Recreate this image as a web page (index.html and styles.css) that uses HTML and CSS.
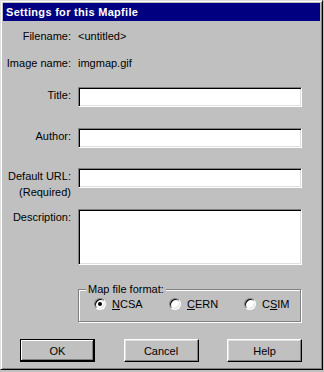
FILE: index.html
```html
<!DOCTYPE html>
<html>
<head>
<meta charset="utf-8">
<link rel="stylesheet" href="styles.css">
</head>
<body>
<div class="window">
  <div class="titlebar">Settings for this Mapfile</div>
  <div class="body">
    <div class="row r-file"><span class="label">Filename:</span><span class="value">&lt;untitled&gt;</span></div>
    <div class="row r-image"><span class="label">Image name:</span><span class="value">imgmap.gif</span></div>
    <div class="row r-title"><label class="label">Title:</label><input class="field" type="text"></div>
    <div class="row r-author"><label class="label">Author:</label><input class="field" type="text"></div>
    <div class="row r-url"><label class="label">Default URL:<br>(Required)</label><input class="field" type="text"></div>
    <div class="row r-desc"><label class="label">Description:</label><textarea class="field area"></textarea></div>
    <div class="row r-format">
      <span class="label"></span>
      <fieldset class="group">
        <legend class="legend">Map file format:</legend>
        <div class="radios">
          <span class="opt"><span class="radio on"></span><span><u>N</u>CSA</span></span>
          <span class="opt"><span class="radio"></span><span><u>C</u>ERN</span></span>
          <span class="opt"><span class="radio"></span><span>C<u>S</u>IM</span></span>
        </div>
      </fieldset>
    </div>
    <div class="buttons">
      <button class="btn default">OK</button>
      <button class="btn">Cancel</button>
      <button class="btn">Help</button>
    </div>
  </div>
</div>
</body>
</html>
```
FILE: styles.css
```css
* { box-sizing: border-box; }
html, body { margin: 0; }
body {
  background: #c0c0c0;
  font: 11px "Liberation Sans", Arial, sans-serif;
  color: #000;
}
.window {
  width: 323px;
  height: 370px;
  background: #c0c0c0;
  border: 1px solid;
  border-color: #dfdfdf #000 #000 #dfdfdf;
  box-shadow: inset 1px 1px #fff, inset -1px -1px #808080;
  padding: 2px;
  display: flex;
  flex-direction: column;
}
.titlebar {
  height: 18px;
  line-height: 18px;
  background: #000080;
  color: #fff;
  font-weight: bold;
  letter-spacing: 0.3px;
  padding-left: 3px;
}
.body { display: flex; flex-direction: column; }
.row { display: flex; align-items: flex-start; gap: 7px; }
.label {
  width: 68px;
  flex: none;
  text-align: right;
  line-height: 16px;
}
.value { line-height: 16px; }
.r-file { margin-top: 7px; }
.r-image { margin-top: 11px; }
.r-title { margin-top: 16px; }
.r-author { margin-top: 21px; }
.r-url { margin-top: 20px; }
.r-desc { margin-top: 9px; }
.r-format { margin-top: 17px; }
.field {
  width: 224px;
  height: 20px;
  margin: 0;
  padding: 0 3px;
  background: #fff;
  border: 1px solid;
  border-color: #808080 #fff #fff #808080;
  box-shadow: inset 1px 1px #000, inset -1px -1px #dfdfdf;
  font: inherit;
  outline: none;
}
.area { height: 56px; resize: none; overflow: hidden; }
.group {
  width: 223px;
  margin: 0;
  padding: 1px 0 10px 0;
  border: 1px solid #808080;
  box-shadow: 1px 1px 0 #fff, inset 1px 1px 0 #fff;
  min-width: 0;
}
.legend {
  margin-left: 7px;
  padding: 0 2px;
  line-height: 14px;
  background: #c0c0c0;
}
.radios {
  display: grid;
  grid-template-columns: 75px 75px 75px;
  padding-left: 15px;
}
.opt {
  display: flex;
  align-items: center;
  gap: 6px;
  line-height: 14px;
}
.radio {
  width: 12px;
  height: 12px;
  flex: none;
  border-radius: 50%;
  background: #fff;
  border: 1px solid;
  border-color: #808080 #fff #fff #808080;
  box-shadow: inset 1px 1px #000, inset -1px -1px #dfdfdf;
  display: flex;
  align-items: center;
  justify-content: center;
}
.radio.on::after {
  content: "";
  width: 4px;
  height: 4px;
  border-radius: 50%;
  background: #000;
}
.buttons {
  margin-top: 17px;
  margin-left: 17px;
  width: 282px;
  display: flex;
  justify-content: space-between;
}
.btn {
  width: 75px;
  height: 23px;
  margin: 0;
  padding: 0;
  font: inherit;
  color: #000;
  background: #c0c0c0;
  border: 1px solid;
  border-color: #fff #000 #000 #fff;
  box-shadow: inset -1px -1px #808080, inset 1px 1px #dfdfdf;
}
.btn.default {
  border: 1px solid #000;
  box-shadow: inset -1px -1px #000, inset 1px 1px #fff, inset -2px -2px #808080;
}
```
